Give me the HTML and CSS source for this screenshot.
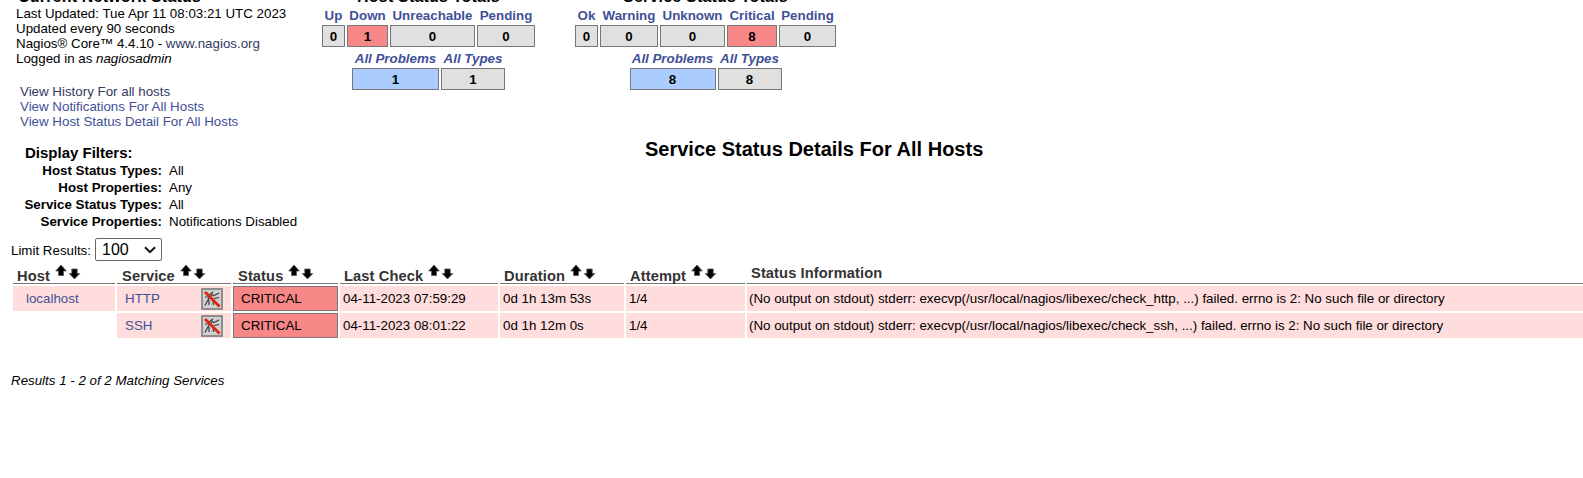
FILE: index.html
```html
<!DOCTYPE html>
<html lang="en">
<head>
<meta charset="utf-8">
<title>Current Network Status</title>
<link rel="stylesheet" href="styles.css">
</head>
<body>
<svg class="defs" width="0" height="0">
  <symbol id="sort" viewBox="0 0 26 16">
    <path d="M6 1 L11.3 7 H8.5 V11.500 H3.500 V7 H.7 Z" fill="#000" stroke="#555" stroke-width=".8"/>
    <path d="M19.500 15 L24.800 9.500 H22.200 V5 H16.800 V9.500 H14.200 Z" fill="#000" stroke="#555" stroke-width=".8"/>
  </symbol>
  <symbol id="muted" viewBox="0 0 22 22">
    <rect x="1" y="1" width="20" height="20" fill="#d0d0d0" stroke="#858585" stroke-width="1.800"/>
    <path d="M4 17.500 L8 10 L12 6 M8 7 L12 4 M12 8 L18 5 M13 10.500 L18 9.500 M8 12 V17 M12 13 L12.500 17 M4 9 L9 9" fill="none" stroke="#3a3a3a" stroke-width="1.200"/>
    <path d="M4 4 L18.500 18.500" stroke="#dd2517" stroke-width="2.800"/>
  </symbol>
</svg>
<header class="top">
  <section class="info">
    <h1 class="caption info-title">Current Network Status</h1>
    <div class="lines">
      <div>Last Updated: Tue Apr 11 08:03:21 UTC 2023</div>
      <div>Updated every 90 seconds</div>
      <div>Nagios® Core™ 4.4.10 - <a class="dark">www.nagios.org</a></div>
      <div>Logged in as <i>nagiosadmin</i></div>
    </div>
    <nav class="links">
      <a class="dark">View History For all hosts</a>
      <a>View Notifications For All Hosts</a>
      <a>View Host Status Detail For All Hosts</a>
    </nav>
  </section>
  <section class="totals host-totals">
    <h2 class="caption">Host Status Totals</h2>
    <div class="grid host-grid">
      <a>Up</a><a>Down</a><a>Unreachable</a><a>Pending</a>
      <b>0</b><b class="red">1</b><b>0</b><b>0</b>
    </div>
    <div class="grid host-sum">
      <a><i>All Problems</i></a><a><i>All Types</i></a>
      <b class="blue">1</b><b>1</b>
    </div>
  </section>
  <section class="totals">
    <h2 class="caption">Service Status Totals</h2>
    <div class="grid service-grid">
      <a>Ok</a><a>Warning</a><a>Unknown</a><a>Critical</a><a>Pending</a>
      <b>0</b><b>0</b><b>0</b><b class="red">8</b><b>0</b>
    </div>
    <div class="grid service-sum">
      <a><i>All Problems</i></a><a><i>All Types</i></a>
      <b class="blue">8</b><b>8</b>
    </div>
  </section>
</header>
<section class="middle">
  <div class="filters">
    <h3 class="filter-title">Display Filters:</h3>
    <dl class="filter-list">
      <dt>Host Status Types:</dt><dd>All</dd>
      <dt>Host Properties:</dt><dd>Any</dd>
      <dt>Service Status Types:</dt><dd>All</dd>
      <dt>Service Properties:</dt><dd>Notifications Disabled</dd>
    </dl>
  </div>
  <h2 class="page-title">Service Status Details For All Hosts</h2>
</section>
<div class="limit">
  <span class="limit-label">Limit Results:</span>
  <div class="select"><span>100</span><svg width="12" height="8" viewBox="0 0 12 8"><path d="M1 1.200 L6 6.200 L11 1.200" fill="none" stroke="#111" stroke-width="2"/></svg></div>
</div>
<main class="status">
  <div class="th">Host<svg class="sort"><use href="#sort"/></svg></div>
  <div class="th">Service<svg class="sort"><use href="#sort"/></svg></div>
  <div class="th">Status<svg class="sort"><use href="#sort"/></svg></div>
  <div class="th">Last Check<svg class="sort"><use href="#sort"/></svg></div>
  <div class="th">Duration<svg class="sort"><use href="#sort"/></svg></div>
  <div class="th">Attempt<svg class="sort"><use href="#sort"/></svg></div>
  <div class="th plain">Status Information</div>

  <div class="td host"><a>localhost</a></div>
  <div class="td service"><a>HTTP</a><svg class="muted"><use href="#muted"/></svg></div>
  <div class="td critical">CRITICAL</div>
  <div class="td">04-11-2023 07:59:29</div>
  <div class="td">0d 1h 13m 53s</div>
  <div class="td">1/4</div>
  <div class="td out">(No output on stdout) stderr: execvp(/usr/local/nagios/libexec/check_http, ...) failed. errno is 2: No such file or directory</div>

  <div></div>
  <div class="td service"><a>SSH</a><svg class="muted"><use href="#muted"/></svg></div>
  <div class="td critical">CRITICAL</div>
  <div class="td">04-11-2023 08:01:22</div>
  <div class="td">0d 1h 12m 0s</div>
  <div class="td">1/4</div>
  <div class="td out">(No output on stdout) stderr: execvp(/usr/local/nagios/libexec/check_ssh, ...) failed. errno is 2: No such file or directory</div>
</main>
<footer class="results">Results 1 - 2 of 2 Matching Services</footer>
</body>
</html>
```
FILE: styles.css
```css
* { box-sizing: border-box; }
body {
  margin: 0;
  height: 478px;
  overflow: hidden;
  background: #fff;
  color: #000;
  font: 13.333px/15px "Liberation Sans", Arial, sans-serif;
  white-space: nowrap;
}
h1, h2, h3, dl, dd { margin: 0; }
a { color: #3f5097; }
a.dark { color: #33395f; }
.defs { display: block; height: 0; }
.top { display: flex; height: 130px; }
.caption { font-size: 16px; letter-spacing: .2px; line-height: 18px; margin-top: -12px; }
.info { width: 322px; padding-left: 16px; }
.info-title { padding-left: 2px; }
.links { display: flex; flex-direction: column; padding: 18px 0 0 4px; }
.totals { display: flex; flex-direction: column; align-items: center; }
.host-totals { margin-right: 40px; }
.grid { display: grid; column-gap: 2px; grid-template-rows: 19px 22px; text-align: center; font-weight: bold; }
.grid a { line-height: 19px; }
.grid b { border: 1px solid #777; background: #e0e0e0; line-height: 21px; }
.grid .red { background: #f88888; }
.grid .blue { background: #aaccff; }
.host-grid { grid-template-columns: 23px 41px 85px 58px; }
.service-grid { grid-template-columns: 23px 58px 65px 50px 57px; }
.host-sum, .service-sum { margin-top: 2px; }
.host-sum { grid-template-columns: 87px 64px; }
.service-sum { grid-template-columns: 86px 64px; }
.middle { display: flex; height: 108px; padding-top: 14px; }
.filters { width: 645px; }
.filter-title { padding-left: 25px; font-size: 15px; line-height: 18px; }
.filter-list { display: grid; grid-template-columns: 162px auto; column-gap: 7px; line-height: 17px; }
.filter-list dt { text-align: right; font-weight: bold; }
.page-title { font-size: 20px; line-height: 24px; margin-top: -7px; }
.limit { display: flex; height: 23px; padding-left: 11px; }
.limit-label { width: 84px; line-height: 25px; }
.select { display: flex; align-items: center; justify-content: space-between; width: 67px; height: 23px; padding: 0 5px 0 6px; border: 1px solid #666; border-radius: 2px; font-size: 16px; }
.status { display: grid; width: 1570px; margin-left: 13px; grid-template-columns: 102px 114px 105px 158px 124px 119px 1fr; grid-template-rows: 23px 25px 25px; gap: 2px; }
.th { display: flex; padding: 7px 0 0 4px; border-bottom: 1px solid #777; color: #333; font-size: 14.667px; letter-spacing: .1px; font-weight: bold; line-height: 17px; }
.th.plain { padding-top: 4px; }
.th:nth-child(2), .th:nth-child(3) { padding-left: 5px; }
.sort { width: 26px; height: 16px; margin: -4px 0 0 5px; }
.td { padding-left: 3px; background: #ffdddd; line-height: 25px; }
.td.host { padding-left: 13px; }
.td.out { padding-left: 2px; }
.td.service { display: flex; justify-content: space-between; padding: 0 8px; }
.td.critical { padding-left: 7px; border: 1px solid #777; background: #f88888; line-height: 23px; }
.muted { width: 22px; height: 22px; margin-top: 2px; }
.results { margin-top: 34px; padding-left: 11px; font-style: italic; line-height: 17px; }
```
